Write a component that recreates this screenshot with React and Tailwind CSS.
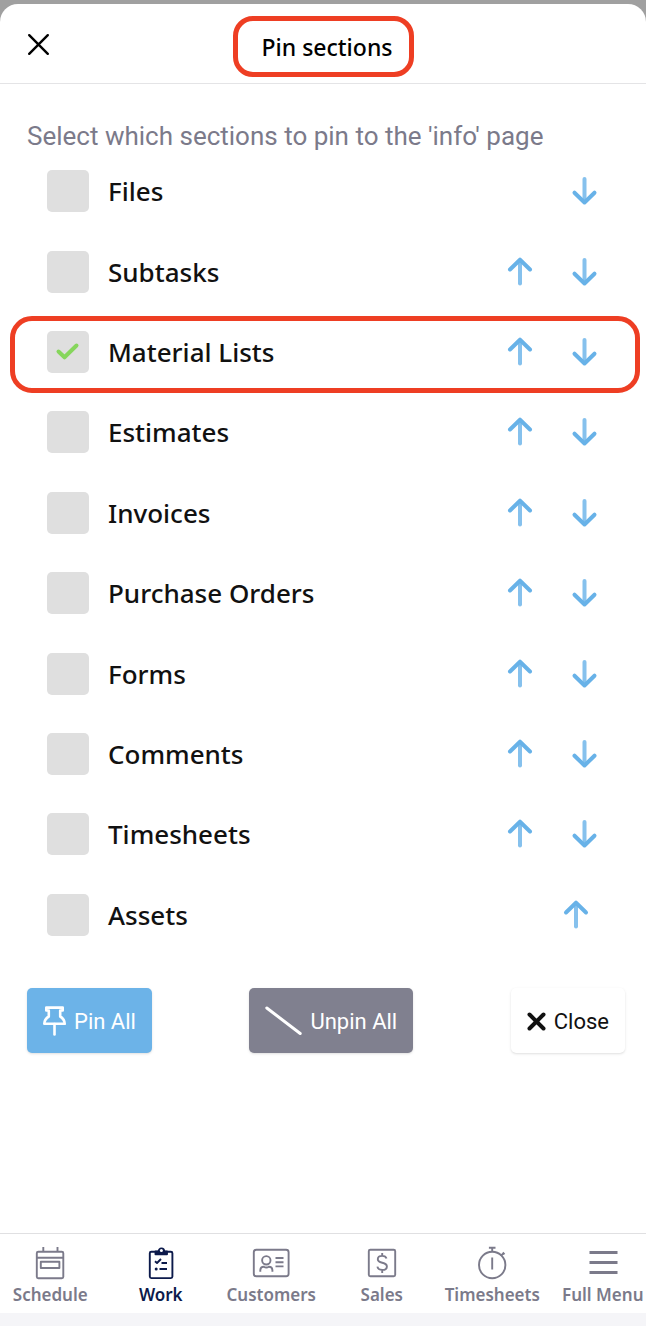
import React, { useState } from 'react';

const SECTIONS = [
    'Files',
    'Subtasks',
    'Material Lists',
    'Estimates',
    'Invoices',
    'Purchase Orders',
    'Forms',
    'Comments',
    'Timesheets',
    'Assets',
];

function ArrowButton({ direction, label }) {
    const up = direction === 'up';
    return (
        <button
            type="button"
            aria-label={label}
            className={`flex h-14 w-14 items-center justify-center text-[#68b2e8] ${up ? 'mr-2' : ''}`}
        >
            <svg width="28" height="32" viewBox="0 0 28 32" fill="none" stroke="currentColor" strokeWidth="4" strokeLinecap="round" strokeLinejoin="round">
                <path d={up ? 'M14 5V27.5' : 'M14.5 4V26'} opacity="0.8" />
                <path d={up ? 'M4 13.5L14 3.7L24 13.5' : 'M4.5 17.7L14.5 27.5L24.5 17.7'} />
            </svg>
        </button>
    );
}

function SectionRow({ name, checked, onToggle, canMoveUp, canMoveDown, highlighted }) {
    return (
        <li className="relative flex items-center justify-between pl-[47px] pr-[34px]">
            <label className="flex items-center gap-[19px] text-[26px] leading-8 font-medium text-[#111]">
                <span className="grid h-[42px] w-[42px] place-items-center">
                    <input
                        type="checkbox"
                        checked={checked}
                        onChange={onToggle}
                        className="peer col-start-1 row-start-1 h-[42px] w-[42px] appearance-none rounded-[5px] bg-[#dfdfdf]"
                    />
                    <svg
                        className="pointer-events-none invisible col-start-1 row-start-1 peer-checked:visible"
                        width="42"
                        height="42"
                        viewBox="0 0 42 42"
                        fill="none"
                        stroke="#86d65c"
                        strokeWidth="4"
                        strokeLinecap="round"
                        strokeLinejoin="round"
                    >
                        <path d="M11.5 20.5L17.5 26.3L29.5 14.5" />
                    </svg>
                </span>
                {name}
            </label>
            <div className="flex">
                {canMoveUp && <ArrowButton direction="up" label={`Move ${name} up`} />}
                {canMoveDown && <ArrowButton direction="down" label={`Move ${name} down`} />}
            </div>
            {highlighted && (
                <span className="pointer-events-none absolute top-1 right-1.5 -bottom-px left-2.5 rounded-[22px] border-5 border-[#ee3e23]" />
            )}
        </li>
    );
}

function ScheduleIcon() {
    return (
        <svg width="40" height="36" viewBox="0 0 40 36" fill="none" stroke="currentColor" strokeWidth="1.9" strokeLinejoin="round">
            <rect x="6.8" y="6.8" width="26.5" height="26.5" rx="1.5" />
            <path d="M6.8 12.8H33.3M13.3 2V7M27.5 2V7" />
            <rect x="10.8" y="16.8" width="18.6" height="6.2" />
        </svg>
    );
}

function WorkIcon() {
    return (
        <svg width="40" height="36" viewBox="0 0 40 36" fill="none" stroke="currentColor" strokeWidth="1.9" strokeLinejoin="round">
            <rect x="8.8" y="6.8" width="22.6" height="26.3" rx="1.5" />
            <path d="M14.5 6.5H17.6A2.8 3 0 1 1 23.2 6.5H26V9.2H14.5Z" fill="currentColor" />
            <circle cx="20.4" cy="5.6" r="1.5" fill="#fff" stroke="none" />
            <path d="M14 16.2L16 18L20 14M20.5 18H26M18.5 24H26" />
            <circle cx="15.2" cy="24" r="1.5" fill="currentColor" stroke="none" />
        </svg>
    );
}

function CustomersIcon() {
    return (
        <svg width="40" height="36" viewBox="0 0 40 36" fill="none" stroke="currentColor" strokeWidth="1.9">
            <rect x="2.8" y="4.8" width="34.8" height="26.4" rx="2.5" />
            <circle cx="15.3" cy="15.3" r="4.2" />
            <path d="M9.3 26.8V25A3.5 3.5 0 0 1 12.8 21.8C14.5 22.8 16.2 22.8 17.9 21.8A3.5 3.5 0 0 1 21.4 25V26.8M24.5 13H32.5M24.5 17.2H32.5M24.5 21.4H32.5" />
        </svg>
    );
}

function SalesIcon() {
    return (
        <svg width="40" height="36" viewBox="0 0 40 36" fill="none" stroke="currentColor" strokeWidth="1.9">
            <rect x="6.8" y="4.8" width="26.4" height="26.4" rx="1.5" />
            <path d="M24.5 13.6C24 11.8 22.4 10.9 20.2 10.9C17.6 10.9 15.8 12.2 15.8 14.2C15.8 19 24.9 16.4 24.9 21.4C24.9 23.6 23 24.9 20.3 24.9C17.7 24.9 15.8 23.8 15.4 21.6M20.2 8V11M20.2 25V28" />
        </svg>
    );
}

function TimesheetsIcon() {
    return (
        <svg width="40" height="36" viewBox="0 0 40 36" fill="none" stroke="currentColor" strokeWidth="1.9">
            <circle cx="20.2" cy="20" r="13.2" />
            <path d="M16.9 2.8H23.5M20.2 2.8V6.8M20.2 12.5V24.5M28.7 10.8L31.7 8.3M30.7 7.5L32.5 9.3" />
        </svg>
    );
}

function MenuIcon() {
    return (
        <svg width="40" height="36" viewBox="0 0 40 36" fill="none" stroke="currentColor" strokeWidth="3">
            <path d="M6.5 7.5H34.5M6.5 17.5H34.5M6.5 27.5H34.5" />
        </svg>
    );
}

const NAV_ITEMS = [
    { label: 'Schedule', Icon: ScheduleIcon },
    { label: 'Work', Icon: WorkIcon, active: true },
    { label: 'Customers', Icon: CustomersIcon },
    { label: 'Sales', Icon: SalesIcon },
    { label: 'Timesheets', Icon: TimesheetsIcon },
    { label: 'Full Menu', Icon: MenuIcon },
];

function BottomNav() {
    return (
        <nav className="overflow-hidden border-t border-[#e0e0e2] border-b-[13px] border-b-[#f5f5f8] bg-white">
            <ul className="-mr-3 -ml-[5px] grid grid-cols-6">
                {NAV_ITEMS.map(({ label, Icon, active }) => (
                    <li key={label}>
                        <a
                            href="#"
                            aria-current={active ? 'page' : undefined}
                            className={`flex h-[79px] flex-col items-center gap-0.5 pt-[11px] text-[17px] leading-6 font-semibold whitespace-nowrap ${active ? 'text-[#0c1a4b]' : 'text-[#7b7a8a]'}`}
                        >
                            <Icon />
                            {label}
                        </a>
                    </li>
                ))}
            </ul>
        </nav>
    );
}

export default function App() {
    const [pinned, setPinned] = useState(['Material Lists']);

    const toggle = (name) =>
        setPinned((prev) => (prev.includes(name) ? prev.filter((n) => n !== name) : [...prev, name]));

    return (
        <div className="flex min-h-screen flex-col bg-[#a0a0a0] pt-1 font-['Noto_Sans',sans-serif]">
            <div className="flex flex-1 flex-col rounded-t-[18px] bg-white">
                <header className="grid h-20 grid-cols-[1fr_auto_1fr] items-center border-b border-[#e4e4e6]">
                    <button type="button" aria-label="Close dialog" className="ml-[26px] flex h-6 w-6 items-center justify-center text-black">
                        <svg width="24" height="24" viewBox="0 0 24 24" fill="none" stroke="currentColor" strokeWidth="2.4" strokeLinecap="round">
                            <path d="M3.2 3.2L21.8 21.8M21.8 3.2L3.2 21.8" />
                        </svg>
                    </button>
                    <h1 className="mt-1.5 flex h-[61px] items-center rounded-[20px] border-5 border-[#ee3e23] pr-4 pl-6 text-[23px] leading-8 font-medium whitespace-nowrap text-black">
                        Pin sections
                    </h1>
                </header>

                <main className="flex-1 pt-9">
                    <p className="pl-[27px] font-[Roboto,sans-serif] text-[26px] leading-8 text-[#7b7a8a]">
                        Select which sections to pin to the 'info' page
                    </p>
                    <ul className="-mt-px grid min-h-[804px] auto-rows-fr">
                        {SECTIONS.map((name, i) => (
                            <SectionRow
                                key={name}
                                name={name}
                                checked={pinned.includes(name)}
                                onToggle={() => toggle(name)}
                                canMoveUp={i > 0}
                                canMoveDown={i < SECTIONS.length - 1}
                                highlighted={name === 'Material Lists'}
                            />
                        ))}
                    </ul>

                    <div className="mt-[33px] flex justify-between pr-[21px] pl-[27px] font-[Roboto,sans-serif] text-[22px] leading-8">
                        <button
                            type="button"
                            onClick={() => setPinned(SECTIONS)}
                            className="flex h-[65px] items-center gap-2 rounded-[5px] bg-[#6cb3e8] px-4 pt-0.5 text-white shadow"
                        >
                            <svg width="23" height="32" viewBox="0 0 23 32" fill="none" stroke="currentColor" strokeWidth="2.6" strokeLinejoin="round" strokeLinecap="round">
                                <path d="M3.3 1.6H19.7V4.5H17.2V10.5C19.8 12 21.6 14.6 21.7 17.8H1.3C1.4 14.6 3.2 12 5.8 10.5V4.5H3.3Z" />
                                <path d="M11.5 18V28.5" />
                            </svg>
                            Pin All
                        </button>
                        <button
                            type="button"
                            onClick={() => setPinned([])}
                            className="flex h-[65px] items-center gap-2 rounded-[5px] bg-[#80808f] px-4 pt-0.5 text-white shadow"
                        >
                            <svg width="37" height="32" viewBox="0 0 37 32" fill="none" stroke="currentColor" strokeWidth="3" strokeLinecap="round">
                                <path d="M1.8 2L35.2 27.5" />
                            </svg>
                            Unpin All
                        </button>
                        <button
                            type="button"
                            className="flex h-[65px] items-center gap-2 rounded-[5px] bg-white px-4 pt-0.5 text-[#111] shadow"
                        >
                            <svg width="19" height="20" viewBox="0 0 19 20" fill="none" stroke="currentColor" strokeWidth="4" strokeLinecap="round">
                                <path d="M2.5 2.5L16.5 16.5M16.5 2.5L2.5 16.5" />
                            </svg>
                            Close
                        </button>
                    </div>
                </main>

                <BottomNav />
            </div>
        </div>
    );
}
